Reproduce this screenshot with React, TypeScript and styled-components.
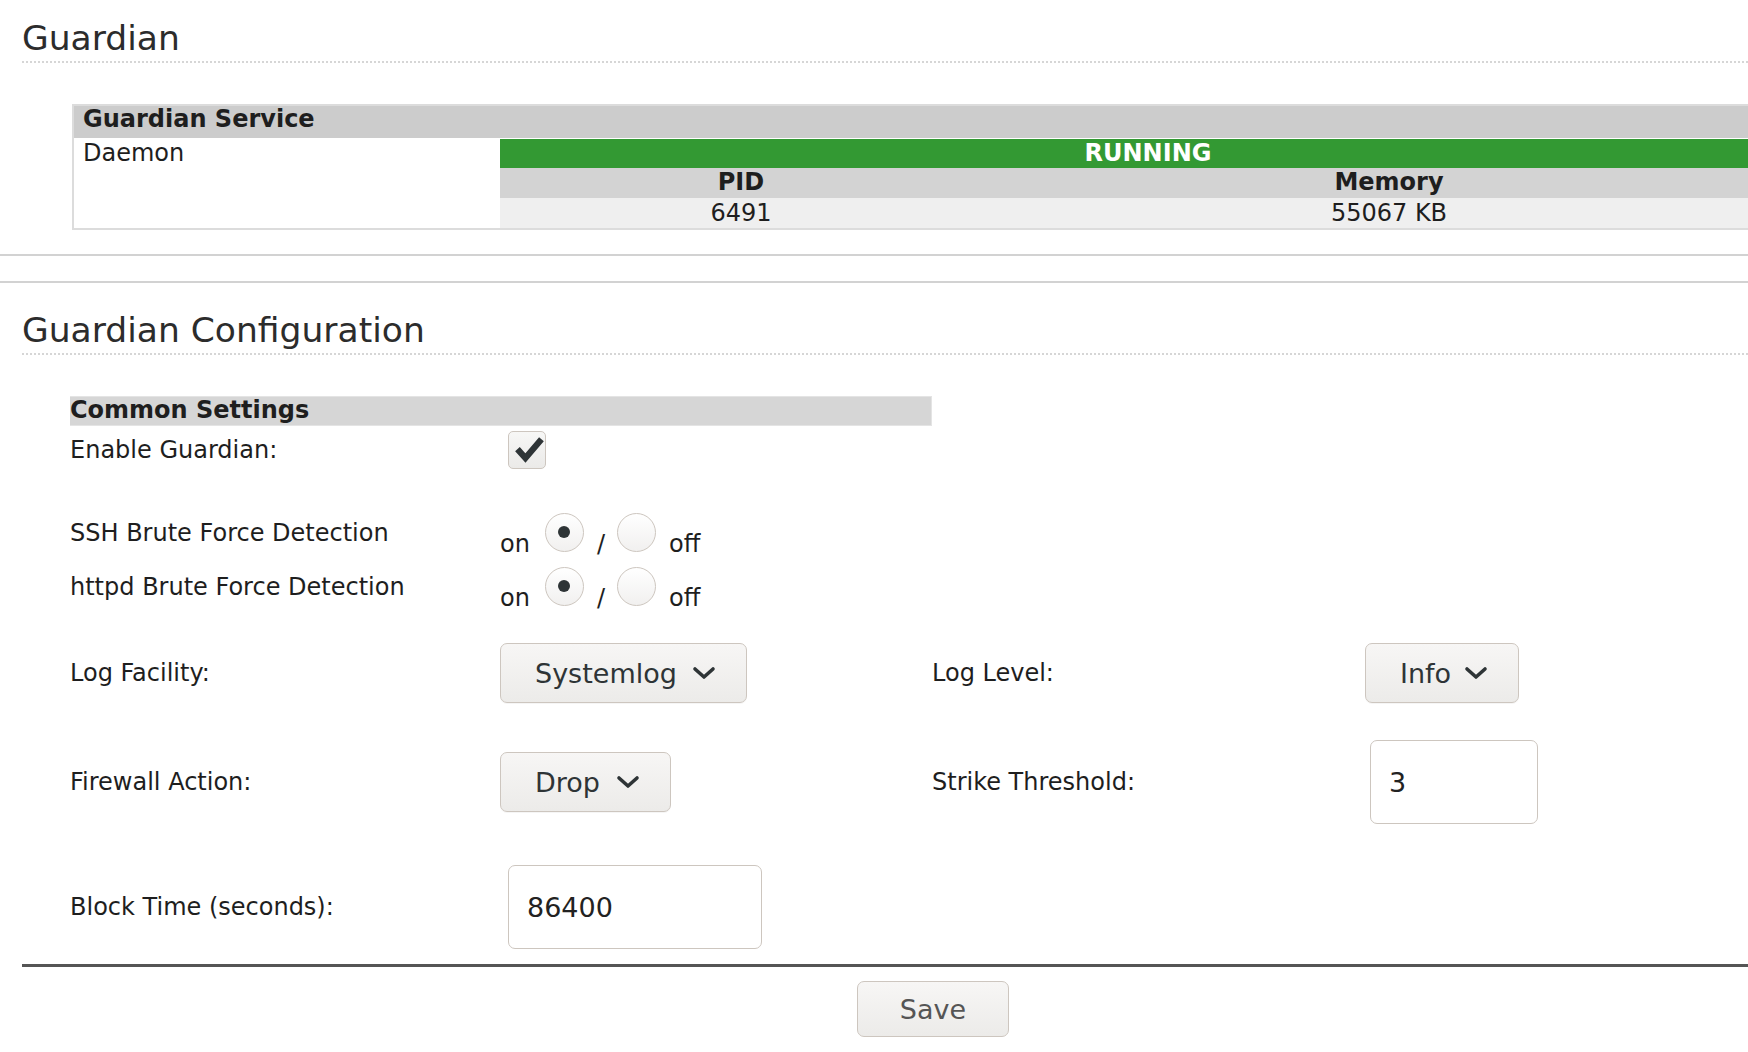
import React from "react";
import styled, { createGlobalStyle } from "styled-components";

const GlobalStyle = createGlobalStyle`
  html, body {
    margin: 0;
    padding: 0;
    background: #ffffff;
    overflow: hidden;
  }
  body {
    font-family: "DejaVu Sans", "Liberation Sans", sans-serif;
    font-size: 24px;
    color: #1e1e1e;
  }
  * { box-sizing: border-box; }
`;

const Page = styled.div`
  width: 1844px;
`;

const Section = styled.section<{ $first?: boolean }>`
  padding: ${(p) => (p.$first ? "17px 0 24px 22px" : "26px 0 0 22px")};
  margin-top: ${(p) => (p.$first ? "0" : "25px")};
  border-bottom: ${(p) => (p.$first ? "2px solid #d2d2d2" : "none")};
  border-top: ${(p) => (p.$first ? "none" : "2px solid #d2d2d2")};
`;

const Heading = styled.h2`
  margin: 0 0 41px 0;
  font-size: 34.5px;
  line-height: 42px;
  font-weight: normal;
  color: #2c2c2c;
  padding-bottom: 2px;
  border-bottom: 2px dotted #d6d6d6;
`;

/* ---------- Service table ---------- */

const ServiceTable = styled.div`
  margin: 1px 0 0 50px;
  width: 1726px;
  border: 2px solid #dcdcdc;
`;

const ServiceHeader = styled.div`
  height: 32px;
  line-height: 26px;
  background: #cccccc;
  padding-left: 9px;
  font-weight: bold;
`;

const ServiceBody = styled.div`
  display: flex;
`;

const NameCell = styled.div`
  width: 426px;
  padding: 1px 0 0 9px;
  line-height: 28px;
`;

const StatusCell = styled.div`
  flex: 1;
  padding-top: 1px;
`;

const StatusBar = styled.div`
  height: 29px;
  line-height: 29px;
  background: #339933;
  color: #ffffff;
  font-weight: bold;
  text-align: center;
`;

const StatsGrid = styled.div`
  display: grid;
  grid-template-columns: 482px 1fr;
`;

const StatHead = styled.div`
  height: 30px;
  line-height: 29px;
  background: #d3d3d3;
  font-weight: bold;
  text-align: center;
`;

const StatValue = styled.div`
  height: 30px;
  line-height: 30px;
  background: #efefef;
  text-align: center;
`;

/* ---------- Settings ---------- */

const Settings = styled.div`
  margin-left: 48px;
`;

const SettingsBar = styled.div`
  width: 862px;
  height: 30px;
  line-height: 27px;
  background: #d6d6d6;
  border: 1px solid #e4e4e4;
  border-left: none;
  font-weight: bold;
`;

const FormRow = styled.div<{ $h: number; $mt?: number }>`
  display: grid;
  grid-template-columns: 430px 432px 433px 431px;
  align-items: center;
  height: ${(p) => p.$h}px;
  margin-top: ${(p) => p.$mt ?? 0}px;
`;

const Label = styled.div<{ $shift?: number }>`
  line-height: 28px;
  transform: translateY(${(p) => p.$shift ?? 0}px);
`;

const Cell = styled.div`
  display: flex;
  align-items: center;
`;

const CheckBox = styled.span`
  display: inline-flex;
  align-items: center;
  justify-content: center;
  width: 38px;
  height: 38px;
  margin-left: 8px;
  border: 1px solid #cdc6bf;
  border-radius: 5px;
  background: linear-gradient(#f7f7f6, #ebeae8);
`;

const RadioGroup = styled.div`
  display: flex;
  align-items: baseline;
  line-height: 28px;
`;

const Radio = styled.span<{ $checked?: boolean }>`
  position: relative;
  display: inline-block;
  width: 39px;
  height: 39px;
  border-radius: 50%;
  border: 1px solid #cdc6bf;
  background: linear-gradient(#ffffff, #f1f0ef);
  &::after {
    content: "";
    display: ${(p) => (p.$checked ? "block" : "none")};
    position: absolute;
    left: 12.5px;
    top: 12px;
    width: 12px;
    height: 12px;
    border-radius: 50%;
    background: #2e3436;
  }
`;

const RadioText = styled.span<{ $ml?: number; $mr?: number }>`
  margin-left: ${(p) => p.$ml ?? 0}px;
  margin-right: ${(p) => p.$mr ?? 0}px;
`;

const SelectButton = styled.button<{ $w: number }>`
  width: ${(p) => p.$w}px;
  height: 60px;
  display: flex;
  align-items: center;
  justify-content: space-between;
  padding: 0 30px 0 34px;
  font-family: "DejaVu Sans", "Liberation Sans", sans-serif;
  font-size: 27px;
  color: #2e3436;
  border: 1px solid #cdc6bf;
  border-radius: 7px;
  background: linear-gradient(#f7f6f5, #ecebe9);
  box-shadow: 0 1px 0 rgba(0, 0, 0, 0.04);
`;

const TextInput = styled.input<{ $w: number; $ml: number }>`
  width: ${(p) => p.$w}px;
  height: 84px;
  margin-left: ${(p) => p.$ml}px;
  padding: 0 0 0 18px;
  font-family: "DejaVu Sans", "Liberation Sans", sans-serif;
  font-size: 27px;
  color: #222;
  border: 1px solid #cdc6bf;
  border-radius: 7px;
  background: #ffffff;
  outline: none;
`;

const Divider = styled.div`
  margin-top: 15px;
  border-top: 3px solid #555555;
`;

const SaveRow = styled.div`
  display: flex;
  justify-content: center;
  padding-top: 14px;
`;

const SaveButton = styled.button`
  width: 152px;
  height: 56px;
  font-family: "DejaVu Sans", "Liberation Sans", sans-serif;
  font-size: 27px;
  color: #555;
  border: 1px solid #cdc6bf;
  border-radius: 7px;
  background: linear-gradient(#f7f6f5, #ecebe9);
`;

const Chevron = () => (
  <svg width="24" height="14" viewBox="0 0 24 14">
    <polyline
      points="3,3 12,11 21,3"
      fill="none"
      stroke="#2e3436"
      strokeWidth="3.6"
      strokeLinecap="round"
      strokeLinejoin="round"
    />
  </svg>
);

const CheckMark = () => (
  <svg width="36" height="36" viewBox="0 0 36 36" style={{ marginLeft: 4 }}>
    <polyline
      points="5,17 14,27 32,6"
      fill="none"
      stroke="#2e3436"
      strokeWidth="7"
      strokeLinecap="butt"
      strokeLinejoin="miter"
    />
  </svg>
);

const OnOff = () => (
  <RadioGroup>
    <RadioText $mr={15}>on</RadioText>
    <Radio $checked />
    <RadioText $ml={13} $mr={12}>/</RadioText>
    <Radio />
    <RadioText $ml={13}>off</RadioText>
  </RadioGroup>
);

export default function App() {
  return (
    <Page>
      <GlobalStyle />
      <Section $first>
        <Heading>Guardian</Heading>
        <ServiceTable>
          <ServiceHeader>Guardian Service</ServiceHeader>
          <ServiceBody>
            <NameCell>Daemon</NameCell>
            <StatusCell>
              <StatusBar>RUNNING</StatusBar>
              <StatsGrid>
                <StatHead>PID</StatHead>
                <StatHead>Memory</StatHead>
                <StatValue>6491</StatValue>
                <StatValue>55067 KB</StatValue>
              </StatsGrid>
            </StatusCell>
          </ServiceBody>
        </ServiceTable>
      </Section>

      <Section>
        <Heading>Guardian Configuration</Heading>
        <Settings>
          <SettingsBar>Common Settings</SettingsBar>
          <FormRow $h={47}>
            <Label>Enable Guardian:</Label>
            <Cell>
              <CheckBox>
                <CheckMark />
              </CheckBox>
            </Cell>
          </FormRow>
          <FormRow $h={54} $mt={35}>
            <Label $shift={-2}>SSH Brute Force Detection</Label>
            <Cell>
              <OnOff />
            </Cell>
          </FormRow>
          <FormRow $h={54}>
            <Label $shift={-2}>httpd Brute Force Detection</Label>
            <Cell>
              <OnOff />
            </Cell>
          </FormRow>
          <FormRow $h={76} $mt={19}>
            <Label>Log Facility:</Label>
            <Cell>
              <SelectButton $w={247}>
                <span>Systemlog</span>
                <Chevron />
              </SelectButton>
            </Cell>
            <Label>Log Level:</Label>
            <Cell>
              <SelectButton $w={154}>
                <span>Info</span>
                <Chevron />
              </SelectButton>
            </Cell>
          </FormRow>
          <FormRow $h={84} $mt={29}>
            <Label>Firewall Action:</Label>
            <Cell>
              <SelectButton $w={171}>
                <span>Drop</span>
                <Chevron />
              </SelectButton>
            </Cell>
            <Label>Strike Threshold:</Label>
            <Cell>
              <TextInput $w={168} $ml={5} readOnly value="3" />
            </Cell>
          </FormRow>
          <FormRow $h={84} $mt={41}>
            <Label>Block Time (seconds):</Label>
            <Cell>
              <TextInput $w={254} $ml={8} readOnly value="86400" />
            </Cell>
          </FormRow>
        </Settings>
        <Divider />
        <SaveRow>
          <SaveButton>Save</SaveButton>
        </SaveRow>
      </Section>
    </Page>
  );
}
